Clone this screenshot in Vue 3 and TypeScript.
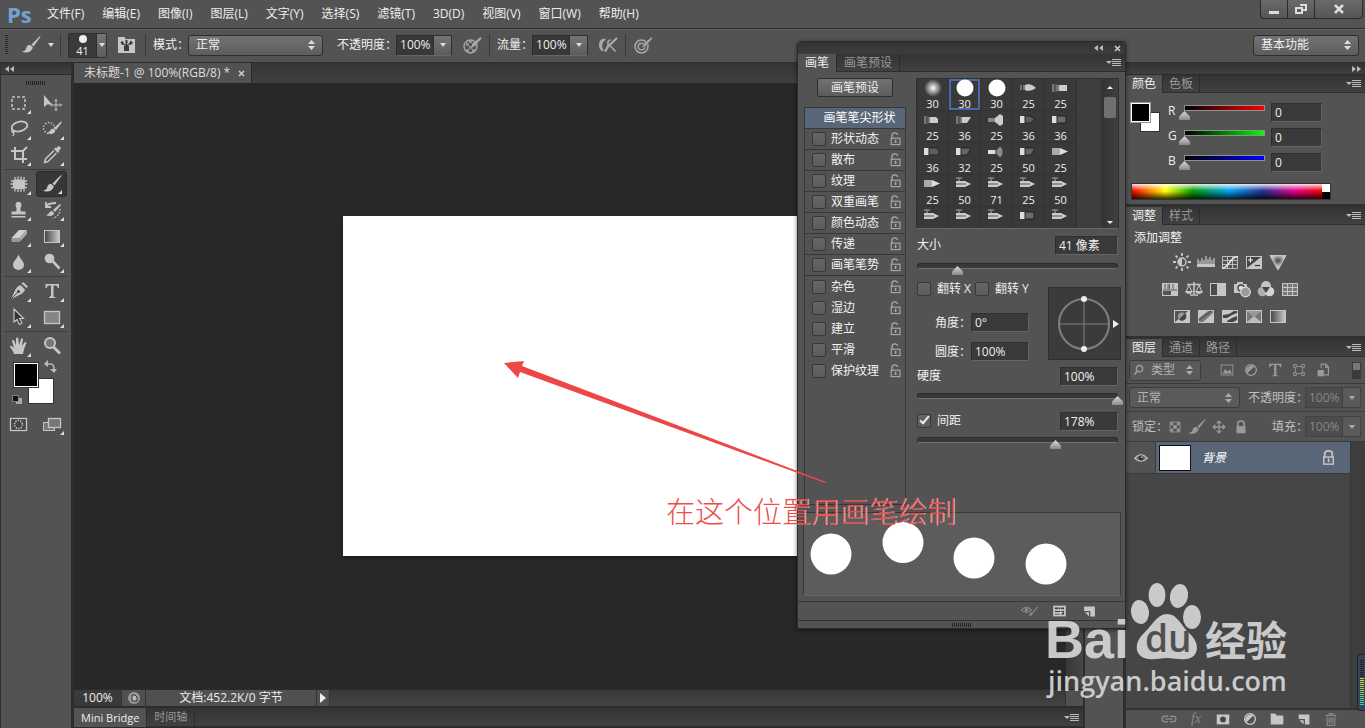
<script setup lang="ts">
import { ref } from 'vue'

interface Tool { icon: string; label: string; more: boolean; active?: boolean }
interface Tip { kind: string; size: string; active?: boolean }

const menus = ['文件(F)', '编辑(E)', '图像(I)', '图层(L)', '文字(Y)', '选择(S)', '滤镜(T)', '3D(D)', '视图(V)', '窗口(W)', '帮助(H)']

const icons: Record<string, string> = {
  brush: '<path d="M19 1 L10.500 9.500 L12.500 11.500 L19.500 1.800Z"/><path d="M9.700 10.200C6.500 9.500 5.500 12 5 14C4.500 15.500 2.500 16.300 1 16.600C4 18.500 10 18 11.900 12.500Z"/>',
  marquee: '<rect x="3" y="4" width="13" height="12" fill="none" stroke="currentColor" stroke-width="1.500" stroke-dasharray="3 2"/>',
  move: '<path d="M2 2V14L5 11.500L10 11.500Z"/><path d="M14 6.500V17.500M8.500 12H19.500M12.500 8L14 6.500L15.500 8M12.500 16L14 17.500L15.500 16M10 10.500L8.500 12L10 13.500M18 10.500L19.500 12L18 13.500" stroke="currentColor" fill="none"/>',
  lasso: '<ellipse cx="10.500" cy="7.500" rx="8" ry="4.800" transform="rotate(-14 10.500 7.500)" fill="none" stroke="currentColor" stroke-width="1.800"/><path d="M4 10.500C1.500 12 3 14 5 13C7 12 4 11 4.500 14C5.500 14.500 5 16 3.500 17" fill="none" stroke="currentColor" stroke-width="1.300"/>',
  quick: '<circle cx="7" cy="9" r="5.500" fill="none" stroke="currentColor" stroke-width="1.300" stroke-dasharray="1.500 1.500"/><path d="M19.500 2L12 9L14 11L19.500 4Z"/><path d="M11.200 9.800C8 9.500 9 13 5 13.500C8 16 13 15 13.300 11.500Z"/>',
  crop: '<path d="M6 2V14H18M2 6H14V18M14 6L18 2" fill="none" stroke="currentColor" stroke-width="2"/>',
  dropper: '<path d="M12 4L16 8L17.500 6.800L16.800 6L18.500 4C19.500 2.500 17.500 .5 16 1.500L14 3.200L13.200 2.500Z"/><path d="M12 5.500L3.500 14L2.500 17.500L6 16.500L14.500 8" fill="none" stroke="currentColor" stroke-width="1.500"/>',
  patch: '<rect x="4" y="5.500" width="12" height="9.500" rx="3"/><path d="M6 3V6M9 2.500V6M12 2.500V6M15 3V6M6 14V17.500M9 14V18M12 14V18M15 14V17.500M2 7H5M1.500 10H5M2 13.500H5M15 7H18M15 10H18.500M15 13.500H18" stroke="currentColor" stroke-width="1.300"/>',
  stamp: '<path d="M7.500 10C8 7.500 6.500 7 6.500 4.800C6.500 .8 12.500 .8 12.500 4.800C12.500 7 11 7.500 11.500 10L12 11.500H16.500V14.500H2.500V11.500H7Z"/><rect x="2.500" y="16" width="14" height="1.500"/>',
  history: '<path d="M18 4L11 10L13 12L19 5Z"/><path d="M10 11C7 11 8 14 4 15C7 17 12 16 12 13Z"/><path d="M4 6C7 3 11 3 14 3M4 2V7H9" fill="none" stroke="currentColor" stroke-width="1.800"/><path d="M18 9C18 13 16 17 11 18" fill="none" stroke="currentColor" stroke-width="1.400" stroke-dasharray="1.500 1.500"/>',
  eraser: '<path d="M10 4H18L10.500 12H2.500Z" fill="#d0d0d0"/><path d="M2.500 12H10.500V16H2.500Z" fill="#999"/><path d="M10.500 12L18 4V8L10.500 16Z" fill="#aaa"/>',
  gradient: '<defs><linearGradient id="toolGrad"><stop stop-color="#444"/><stop offset="1" stop-color="#ccc"/></linearGradient></defs><rect x="2.500" y="4.500" width="15" height="12" fill="url(#toolGrad)" stroke="currentColor"/>',
  drop: '<path d="M9.500 2C10 6 15 9 15 13A5.500 5 0 0 1 4 13C4 9 9 6 9.500 2Z"/>',
  dodge: '<circle cx="7.500" cy="6.500" r="4.800"/><path d="M11 9.500L17.500 16.500" stroke="currentColor" stroke-width="2.600"/>',
  pen: '<path d="M14 1L19 5.500L17.500 7L12.500 2.500Z"/><path d="M11.500 4L16 8.500C15 13 9 14 4 17.500L2.500 16.500C6 11 6 6 11.500 4Z"/><path d="M3 17L9 11" stroke="#444"/><circle cx="9.500" cy="10.500" r="1.500" fill="#444"/>',
  type: '<path d="M3.500 3H17V7H15.700C15.500 5 15 4.500 11.500 4.500V15C11.500 16 12 16 13.500 16.300V17H7V16.300C8.500 16 9 16 9 15V4.500C5.500 4.500 5 5 4.800 7H3.500Z"/>',
  path: '<path d="M5 2V15L8 12.500L10.500 17.500L13 16L10.500 11.500H14.500Z" fill="#333" stroke="currentColor" stroke-width="1.200"/>',
  rect: '<rect x="2.500" y="4.500" width="15" height="12" fill="#858585" stroke="currentColor" stroke-width="1.300"/>',
  hand: '<path d="M5 18C4 14 .5 11 1 10C2 9 4 11 5 12L3 5C3 3.500 5 3.500 5.400 5L7 9.500L7 2.500C7 1 9.200 1 9.400 2.500L10 9L12 3C12.600 1.600 14.200 2.300 14 3.800L12.900 10L15.500 6.500C16.600 5.300 18 6.500 17.200 7.800C15.500 11 15 14 14 18Z"/>',
  zoom: '<circle cx="8" cy="7" r="5" fill="#777" stroke="currentColor" stroke-width="2"/><path d="M11.500 11L18 17.500" stroke="currentColor" stroke-width="3"/>',
  mask: '<rect x="1.500" y="4.500" width="16" height="12" fill="#444" stroke="currentColor" stroke-width="1.300"/><circle cx="9.500" cy="10.500" r="4" fill="none" stroke="currentColor" stroke-width="1.600" stroke-dasharray="1.300 1.200"/>',
  screen: '<rect x="1.500" y="8.500" width="11" height="8" fill="#777" stroke="currentColor"/><rect x="6.500" y="4.500" width="12" height="9" fill="#777" stroke="currentColor" stroke-width="1.300"/>',
  folder: '<path d="M1 2H8V4H18V18H1Z"/><path d="M9.500 16V11M9.500 11L5 8M9.500 11V7M9.500 11L14 8" stroke="#3a3a3a" stroke-width="1.400"/><path d="M7 11H12V16H7ZM3.500 7L6 6L7 9L5 10ZM12 8L14 5.500L16 8L13.500 10ZM8.500 5H10.500V8H8.500Z" fill="#3a3a3a"/>',
  pressA: '<circle cx="8.500" cy="11.500" r="6.500" fill="none" stroke="currentColor" stroke-width="1.400"/><path d="M4 8H7V11H4ZM10 8H13V11H10ZM7 11H10V14H7ZM4 14H7V17H4ZM10 14H13V17H10ZM7 5.500H10V8H7Z" opacity=".7"/><path d="M18.500 2L11 8L9 13L13 11L19.500 3.500Z"/>',
  pressB: '<circle cx="8.500" cy="11.500" r="6.500" fill="none" stroke="currentColor" stroke-width="1.500"/><circle cx="8.500" cy="11.500" r="3.300" fill="none" stroke="currentColor" stroke-width="1.500"/><path d="M18.500 2L11 8L8.500 13L13 11L19.500 3.500Z" stroke="#535353" stroke-width=".6"/>',
  airbrush: '<path d="M8 4C3 3 1 6 1 10C1 14 3 16.500 6 16L4.500 13C3 9 6 6 8 4Z"/><path d="M19 3L10 11.500L7 16.500" fill="none" stroke="currentColor" stroke-width="2.400"/><path d="M10 13V6.500L12.500 4.500M12 10.500L17.500 16.500" fill="none" stroke="currentColor" stroke-width="1.600"/>',
  lockOpen: '<path d="M5 9V5.500C5 1.500 12 1.500 12 5" fill="none" stroke="currentColor" stroke-width="1.600"/><rect x="4" y="9" width="11" height="8" fill="none" stroke="currentColor" stroke-width="1.400"/><rect x="8.500" y="11" width="2" height="4"/>',
  lock: '<path d="M6 10V6C6 2 14 2 14 6V10" fill="none" stroke="currentColor" stroke-width="1.800"/><rect x="5" y="9.500" width="10" height="7.500" fill="none" stroke="currentColor" stroke-width="1.500"/><rect x="9.300" y="11" width="1.600" height="4"/>',
  lockFull: '<path d="M6.500 10V6C6.500 2.500 13.500 2.500 13.500 6V10" fill="none" stroke="currentColor" stroke-width="1.800"/><rect x="5" y="9" width="10" height="8"/>',
  sun: '<circle cx="10" cy="10" r="4" fill="none" stroke="currentColor" stroke-width="1.500"/><path d="M10 6A4 4 0 0 0 10 14Z"/><path d="M10 1V4M10 16V19M1 10H4M16 10H19M3.600 3.600L5.500 5.500M14.500 14.500L16.400 16.400M3.600 16.400L5.500 14.500M14.500 5.500L16.400 3.600" stroke="currentColor" stroke-width="1.800"/>',
  levels: '<rect x="1" y="12" width="18" height="3"/><path d="M2 7V12M4 9V12M6 6V12M8 8V12M10 4V12M12 7V12M14 5V12M16 8V12M18 6V12" stroke="currentColor" stroke-width="1.200"/>',
  curves: '<path d="M2.500 4.500H17.500V16.500H2.500ZM2.500 8.500H17.500M2.500 12.500H17.500M7.500 4.500V16.500M12.500 4.500V16.500" fill="none" stroke="currentColor" stroke-width=".9"/><path d="M2 16C10 16 9 5 18 4.500" fill="none" stroke="#e8e8e8" stroke-width="1.700"/>',
  exposure: '<rect x="2.500" y="4.500" width="15" height="12" fill="#444" stroke="currentColor"/><path d="M17 5V16H3Z"/><path d="M4 8H9M6.500 5.500V10.500" stroke="#eee" stroke-width="1.200"/><path d="M11 13.500H16" stroke="#333" stroke-width="1.200"/>',
  vibrance: '<defs><radialGradient id="vibGrad" cx=".5" cy=".35" r=".4"><stop stop-color="#444"/><stop offset="1" stop-color="#c6c6c6"/></radialGradient></defs><path d="M2 3.500H18L10 18Z" fill="url(#vibGrad)" stroke="currentColor"/>',
  hue: '<rect x="2" y="4" width="16" height="13"/><path d="M5 5V10M8 5V10M9.500 5V10M13 5V10M3 11H17" stroke="#555"/><path d="M3 12H11V16H3Z" fill="#555"/>',
  balance: '<path d="M10 3V15M6 16H14M3 5.500H17" stroke="currentColor" stroke-width="1.600"/><path d="M5 6L2 13H8L5 6M15 6L12 13H18L15 6" fill="none" stroke="currentColor"/><path d="M1 12H9C8 16 2 16 1 12ZM11 12H19C18 16 12 16 11 12Z"/>',
  bw: '<rect x="2.500" y="4.500" width="15" height="12" fill="#4a4a4a" stroke="currentColor"/><rect x="9" y="5" width="9" height="12"/>',
  photo: '<path d="M2 5H5V3H11V5H15V14H2Z"/><circle cx="9" cy="9" r="3" fill="#ddd" stroke="#444" stroke-width="1.300"/><circle cx="13.500" cy="13" r="4.800" fill="#999" stroke="#d5d5d5" stroke-width="1.300"/>',
  mixer: '<circle cx="10" cy="7" r="5"/><circle cx="6.500" cy="12.500" r="4.800" fill="#b0b0b0"/><circle cx="13.500" cy="12.500" r="4.800" fill="#d5d5d5"/><path d="M6 8H14L10 14Z" fill="#444"/>',
  table: '<rect x="2" y="4" width="16" height="13"/><path d="M3 5H7V8H3ZM8 5H12V8H8ZM13 5H17V8H13ZM3 9H7V12H3ZM8 9H12V12H8ZM13 9H17V12H13ZM3 13H7V16H3ZM8 13H12V16H8ZM13 13H17V16H13Z" fill="#777"/>',
  invert: '<rect x="2" y="4" width="16" height="13"/><path d="M3 5H16L3 16Z" fill="#555"/><circle cx="10" cy="10.500" r="4" fill="#999"/><path d="M13 7A4 4 0 0 1 7 13.500Z" fill="#444"/>',
  poster: '<rect x="2" y="4" width="16" height="13"/><path d="M3 12L12 5H17V7L7 16H3Z" fill="#777"/><path d="M3 14L15 5" stroke="#555" stroke-width="1.400"/>',
  threshold: '<rect x="2" y="4" width="16" height="13"/><path d="M3 9L9 8L14 5H17V7L12 9L7 12H3ZM7 15L12 12L17 10V14L13 16H7Z" fill="#444"/>',
  selective: '<rect x="2" y="4" width="16" height="13" fill="#c6c6c6"/><path d="M3 5L10 10.500L3 16ZM17 5V16L10 10.500Z" fill="#777"/><path d="M3 5H17L10 10.500Z" fill="#999"/><path d="M3 16H17L10 10.500Z" fill="#bbb"/>',
  link: '<path d="M9 7H5C1.500 7 1.500 13 5 13H9M11 7H15C18.500 7 18.500 13 15 13H11M6 10H14" fill="none" stroke="currentColor" stroke-width="1.700"/>',
  addmask: '<rect x="3" y="5" width="14" height="11"/><circle cx="10" cy="10.500" r="3.200" fill="#444"/>',
  half: '<circle cx="10" cy="10" r="6" fill="none" stroke="currentColor" stroke-width="1.500"/><path d="M14 5.800A6 6 0 0 0 5.800 14Z"/>',
  dir: '<path d="M3 4H8L9.500 6H17V16H3Z"/>',
  page: '<path d="M4 5H16V16H11V10H4Z"/><path d="M5 11.500H9.500V16Z"/>',
  bin: '<path d="M4 6H16M8 6V4H12V6M5.500 7L6 17H14L14.500 7M8 8V15M10 8V15M12 8V15" fill="none" stroke="currentColor" stroke-width="1.300"/>',
  image: '<rect x="3.500" y="4.500" width="13" height="11" fill="none" stroke="currentColor"/><path d="M5 14L8 9L10.500 12L13 9.500L15.500 14Z"/>',
  shape: '<path d="M6 6H14V14H6Z" fill="none" stroke="currentColor"/><path d="M4 4H7V7H4ZM13 4H16V7H13ZM4 13H7V16H4ZM13 13H16V16H13Z" fill="#535353" stroke="currentColor"/>',
  smart: '<path d="M8 8V3.500H13L16 6.500V15.500H11M13 3.500V7H16" fill="none" stroke="currentColor" stroke-width="1.300"/><rect x="4" y="10" width="7" height="7"/>',
  checker: '<path d="M4.500 4.500H15.500V15.500H4.500Z" fill="none" stroke="currentColor"/><path d="M5 5H8V8H5ZM12 5H15V8H12ZM8 8H12V12H8ZM5 12H8V15H5ZM12 12H15V15H12Z"/>',
  cross: '<path d="M10 3V17M3 10H17M7.500 6L10 3.500L12.500 6M7.500 14L10 16.500L12.500 14M6 7.500L3.500 10L6 12.500M14 7.500L16.500 10L14 12.500" fill="none" stroke="currentColor" stroke-width="1.400"/>',
  eye: '<path d="M3 10.500C7 5 13 5 17 10.500C13 14.500 7 14.500 3 10.500Z" fill="#777" stroke="currentColor" stroke-width="1.300"/><circle cx="10" cy="10" r="2.800" fill="#333"/><circle cx="11" cy="9" r="1"/>',
  eyeBrush: '<path d="M1 9C4 5 9 5 12 9C9 12 4 12 1 9Z" fill="none" stroke="currentColor" stroke-width="1.300"/><circle cx="6.500" cy="8.800" r="2"/><path d="M19 5L13 11L14 12.500L19.500 6ZM12.500 11.500C10 12 11 14 8.500 14.500C11 16 14 15 13.700 12.500Z"/>',
  presets: '<rect x="3" y="4" width="14" height="12"/><path d="M5 6H8V8H5ZM9 6H11V8H9ZM12 6H15V8H12ZM5 10H11V11H5ZM12 10H15V11H12ZM5 13H10V14H5ZM11 14L15 11V14Z" fill="#333"/>',
  search: '<circle cx="9.500" cy="8.500" r="3.500" fill="none" stroke="currentColor" stroke-width="1.500"/><path d="M7 11L4 15" stroke="currentColor" stroke-width="2"/>',
}

const toolGroups: Tool[][] = [
  [
    { icon: 'marquee', label: '选框', more: true }, { icon: 'move', label: '移动', more: false },
    { icon: 'lasso', label: '套索', more: true }, { icon: 'quick', label: '快速选择', more: true },
    { icon: 'crop', label: '裁剪', more: true }, { icon: 'dropper', label: '吸管', more: true },
  ],
  [
    { icon: 'patch', label: '修补', more: true }, { icon: 'brush', label: '画笔', more: true, active: true },
    { icon: 'stamp', label: '图章', more: true }, { icon: 'history', label: '历史画笔', more: true },
    { icon: 'eraser', label: '橡皮擦', more: true }, { icon: 'gradient', label: '渐变', more: true },
    { icon: 'drop', label: '模糊', more: true }, { icon: 'dodge', label: '减淡', more: true },
  ],
  [
    { icon: 'pen', label: '钢笔', more: true }, { icon: 'type', label: '文字', more: true },
    { icon: 'path', label: '路径选择', more: true }, { icon: 'rect', label: '矩形', more: true },
  ],
  [
    { icon: 'hand', label: '抓手', more: true }, { icon: 'zoom', label: '缩放', more: false },
  ],
]

const options = [
  { name: '形状动态', line: true }, { name: '散布', line: true }, { name: '纹理', line: true },
  { name: '双重画笔', line: true }, { name: '颜色动态', line: true }, { name: '传递', line: true },
  { name: '画笔笔势', line: true }, { name: '杂色', line: false }, { name: '湿边', line: false },
  { name: '建立', line: false }, { name: '平滑', line: false }, { name: '保护纹理', line: false },
]

const tips: Tip[] = [
  { kind: 'soft', size: '30' }, { kind: 'hard', size: '30', active: true }, { kind: 'hard', size: '30' }, { kind: 'round', size: '25' }, { kind: 'flat', size: '25' },
  { kind: 'bristle', size: '25' }, { kind: 'angle', size: '36' }, { kind: 'fan', size: '25' }, { kind: 'darkRound', size: '36' }, { kind: 'darkFlat', size: '36' },
  { kind: 'darkBristle', size: '36' }, { kind: 'darkAngle', size: '32' }, { kind: 'darkFan', size: '25' }, { kind: 'darkAngle', size: '50' }, { kind: 'pencil', size: '25' },
  { kind: 'pencil', size: '25' }, { kind: 'air', size: '50' }, { kind: 'air', size: '71' }, { kind: 'air', size: '25' }, { kind: 'air', size: '50' },
  { kind: 'air', size: '' }, { kind: 'air', size: '' }, { kind: 'air', size: '' }, { kind: 'darkFlat', size: '' }, { kind: 'air', size: '' },
]

const tipArt: Record<string, string> = {
  soft: '<defs><radialGradient id="softTip"><stop stop-color="#fff"/><stop offset="1" stop-color="#fff" stop-opacity="0"/></radialGradient></defs><circle cx="16" cy="9" r="9" fill="url(#softTip)"/>',
  hard: '<circle cx="16" cy="9" r="8.500" fill="#fff"/>',
  round: '<path d="M7 6H9V11H7ZM10 6H12V11H10Z" fill="#777"/><path d="M12 6C16 4 20 6 23 9C20 11 16 13 12 11Z" fill="#ccc"/>',
  flat: '<path d="M7 5L15 6V12L7 13Z" fill="#777"/><path d="M10 6V12" stroke="#333"/><path d="M14 6H22V12H14Z" fill="#ccc"/>',
  bristle: '<path d="M7 5L13 6V12L7 13Z" fill="#777"/><path d="M10 6V12" stroke="#333"/><path d="M13 6H19L21 8V12H13Z" fill="#ccc"/>',
  angle: '<path d="M7 5L13 6V12L7 13Z" fill="#777"/><path d="M10 6V12" stroke="#333"/><path d="M13 6H22L18 12H13Z" fill="#ccc"/>',
  fan: '<path d="M7 7H14V11H7Z" fill="#888"/><path d="M14 7L19 3L22 5V13L19 15L14 11Z" fill="#ccc"/>',
  darkRound: '<path d="M7 5H12V12H7Z" fill="#ddd"/><path d="M12 5H17L22 9L17 12H12Z" fill="#5e5e5e" stroke="#222"/>',
  darkFlat: '<path d="M7 5H12V12H7Z" fill="#ddd"/><path d="M12 5H21V12H12Z" fill="#6a6a6a" stroke="#222"/>',
  darkBristle: '<path d="M7 5H12V12H7Z" fill="#ddd"/><path d="M12 5H19L22 7V11L20 12H12Z" fill="#5e5e5e" stroke="#222"/>',
  darkAngle: '<path d="M7 5H12V12H7Z" fill="#ddd"/><path d="M12 5H22L18 12H12Z" fill="#666" stroke="#222"/>',
  darkFan: '<path d="M7 7H15V11H7Z" fill="#ddd"/><path d="M15 7L19 3L22 6V12L19 15L15 11Z" fill="#888" stroke="#333"/>',
  pencil: '<path d="M7 5H15V12H7Z" fill="#aaa"/><path d="M15 5L23 8.500L15 12Z" fill="#ddd"/>',
  air: '<path d="M7 3H13M10 3V6" stroke="#aaa"/><path d="M7 6H16L22 9L16 12H7Z" fill="#ccc"/><path d="M7 9H17" stroke="#555"/>',
}

const channels = ['R', 'G', 'B']
const adjustments = [
  ['sun', 'levels', 'curves', 'exposure', 'vibrance'],
  ['hue', 'balance', 'bw', 'photo', 'mixer', 'table'],
  ['invert', 'poster', 'threshold', 'selective', 'gradient'],
]
const layerFilters = ['image', 'half', 'type', 'shape', 'smart']
const layerLocks = ['checker', 'brush', 'cross', 'lockFull']
const layerActions = ['link', 'fx', 'addmask', 'half', 'dir', 'page', 'bin']

const size = ref(20)
const hardness = ref(100)
const spacing = ref(69)
const spacingOn = ref(true)
</script>

<template>
  <div class="app">
    <header class="menubar">
      <span class="logo">Ps</span>
      <nav class="menus"><button v-for="m in menus" :key="m" type="button">{{ m }}</button></nav>
      <div class="winbtns">
        <button type="button" aria-label="最小化"><svg width="12" height="12"><path d="M1 8H11V11H1Z" fill="#ddd" /></svg></button>
        <button type="button" aria-label="还原"><svg width="12" height="12"><path d="M5 2H11V7H8M1 5H7V10H1Z" fill="none" stroke="#ddd" stroke-width="2" /></svg></button>
        <button type="button" class="close" aria-label="关闭"><svg width="12" height="12"><path d="M2 2L10 10M10 2L2 10" stroke="#ddd" stroke-width="2.500" /></svg></button>
      </div>
    </header>

    <section class="optbar">
      <i class="grip-v" />
      <button type="button" class="brushpick" aria-label="画笔工具">
        <svg class="ico" viewBox="0 0 20 20" v-html="icons.brush" /><i class="caret" />
      </button>
      <i class="vsep" />
      <button type="button" class="sizebox" aria-label="画笔大小"><span class="sizeval"><i />41</span><span class="drop"><i class="caret" /></span></button>
      <button type="button" class="plain folder" aria-label="画笔面板"><svg class="ico" viewBox="0 0 20 20" v-html="icons.folder" /></button>
      <i class="vsep" />
      <label class="cn" for="mode">模式：</label>
      <span class="sel mode"><select id="mode"><option>正常</option></select><svg width="7" height="10"><path d="M0 4L3.500 0L7 4ZM0 6H7L3.500 10Z" fill="#ddd" /></svg></span>
      <label class="cn opacity" for="opacity">不透明度：</label>
      <span class="combo"><input id="opacity" value="100%"><button type="button" class="drop" aria-label="不透明度选项"><i class="caret" /></button></span>
      <button type="button" class="plain dim" aria-label="压力不透明度"><svg class="ico" viewBox="0 0 20 20" v-html="icons.pressA" /></button>
      <i class="vsep" />
      <label class="cn" for="flow">流量：</label>
      <span class="combo"><input id="flow" value="100%"><button type="button" class="drop" aria-label="流量选项"><i class="caret" /></button></span>
      <button type="button" class="plain dim" aria-label="喷枪"><svg class="ico" viewBox="0 0 20 20" v-html="icons.airbrush" /></button>
      <i class="vsep" />
      <button type="button" class="plain dim" aria-label="压力大小"><svg class="ico" viewBox="0 0 20 20" v-html="icons.pressB" /></button>
      <span class="sel workspace"><select aria-label="工作区"><option>基本功能</option></select><svg width="7" height="10"><path d="M0 4L3.500 0L7 4ZM0 6H7L3.500 10Z" fill="#ddd" /></svg></span>
    </section>

    <div class="body">
      <aside class="tools">
        <div class="strip"><svg width="9" height="6"><path d="M4 0V6L0 3ZM9 0V6L5 3Z" fill="#bbb" /></svg></div>
        <div class="griprow"><i class="grip-h" /></div>
        <div v-for="(g, gi) in toolGroups" :key="gi" class="group">
          <button v-for="t in g" :key="t.icon" type="button" class="tool" :class="{ active: t.active, more: t.more }" :aria-label="t.label">
            <svg class="ico" viewBox="0 0 20 20" v-html="icons[t.icon]" />
          </button>
        </div>
        <div class="swatches">
          <svg viewBox="0 0 66 48" width="66" height="48">
            <rect x="25.500" y="19.500" width="25" height="25" fill="#fff" stroke="#333" />
            <rect x="10.500" y="3.500" width="25" height="25" fill="#fff" stroke="#333" /><rect x="12" y="5" width="22" height="22" />
            <path d="M44 5H48C50 5 51 7 51 11" fill="none" stroke="#bbb" stroke-width="1.500" /><path d="M45 1V8L41 5ZM47 10H54L51 14Z" fill="#bbb" />
            <path d="M13 39H19V45H13Z" fill="#aaa" /><path d="M9.500 36.500H15.500V42.500H9.500Z" fill="#111" stroke="#888" />
          </svg>
        </div>
        <div class="group modes">
          <button type="button" class="tool" aria-label="快速蒙版"><svg class="ico" viewBox="0 0 20 20" v-html="icons.mask" /></button>
          <button type="button" class="tool more" aria-label="屏幕模式"><svg class="ico" viewBox="0 0 20 20" v-html="icons.screen" /></button>
        </div>
      </aside>

      <main class="work">
        <div class="doctabs"><div class="doctab"><span>未标题-1 @ 100%(RGB/8) *</span><button type="button" aria-label="关闭文档"><svg width="7" height="7"><path d="M1 1L6 6M6 1L1 6" stroke="#ccc" stroke-width="1.600" /></svg></button></div></div>
        <div class="view">
          <div class="canvas"><div class="paper" /></div>
          <div class="vscroll" />
        </div>
        <div class="status">
          <span class="pct">100%</span>
          <button type="button" class="sicon" aria-label="文档信息"><svg width="14" height="14"><circle cx="7" cy="7" r="6" fill="#999" /><path d="M5 4H8L10 6V10H5Z" fill="#bbb" stroke="#333" /></svg></button>
          <span class="docinfo">文档:452.2K/0 字节</span>
          <button type="button" class="sarrow" aria-label="更多"><svg width="8" height="10"><path d="M1 0L7 5L1 10Z" fill="#eee" /></svg></button>
          <span class="hscroll" />
          <span class="corner" />
        </div>
        <div class="tabs low"><button type="button" class="tab on">Mini Bridge</button><button type="button" class="tab">时间轴</button><i class="menuicon" /></div>
      </main>

      <div class="rail" />

      <aside class="dock">
        <div class="strip right"><svg width="9" height="6"><path d="M0 0V6L4 3ZM5 0V6L9 3Z" fill="#bbb" /></svg></div>

        <section class="panel">
          <div class="tabs"><button type="button" class="tab on">颜色</button><button type="button" class="tab">色板</button><i class="menuicon" /></div>
          <div class="colors">
            <div class="colorrow">
              <svg class="pair" width="32" height="32"><rect x="10.500" y="10.500" width="19" height="19" fill="#fff" stroke="#333" /><rect x=".5" y=".5" width="20" height="20" fill="#fff" stroke="#999" /><rect x="2" y="2" width="17" height="17" /></svg>
              <div class="channels">
                <div v-for="c in channels" :key="c" class="channel">
                  <label :for="'ch' + c">{{ c }}</label>
                  <span class="slider" :class="'s' + c"><input type="range" min="0" max="255" value="0" :aria-label="c"></span>
                  <input :id="'ch' + c" class="field" value="0">
                </div>
              </div>
            </div>
            <div class="spectrum"><i /></div>
          </div>
        </section>

        <section class="panel">
          <div class="tabs"><button type="button" class="tab on">调整</button><button type="button" class="tab">样式</button><i class="menuicon" /></div>
          <div class="adjust">
            <p>添加调整</p>
            <div v-for="(r, ri) in adjustments" :key="ri" class="adjrow">
              <button v-for="a in r" :key="a" type="button" class="plain" :aria-label="a"><svg class="ico" viewBox="0 0 20 20" v-html="icons[a]" /></button>
            </div>
          </div>
        </section>

        <section class="panel layers">
          <div class="tabs"><button type="button" class="tab on">图层</button><button type="button" class="tab">通道</button><button type="button" class="tab">路径</button><i class="menuicon" /></div>
          <div class="lrow filter">
            <span class="sel kind"><svg class="ico lens" viewBox="0 0 20 20" v-html="icons.search" /><select aria-label="类型"><option>类型</option></select><svg width="7" height="10"><path d="M0 4L3.500 0L7 4ZM0 6H7L3.500 10Z" fill="#aaa" /></svg></span>
            <div class="filters"><button v-for="f in layerFilters" :key="f" type="button" class="plain" :aria-label="f"><svg class="ico" viewBox="0 0 20 20" v-html="icons[f]" /></button></div>
            <button type="button" class="toggle" aria-label="过滤开关" />
          </div>
          <div class="lrow blend">
            <span class="sel lmode"><select aria-label="混合模式"><option>正常</option></select><svg width="7" height="10"><path d="M0 4L3.500 0L7 4ZM0 6H7L3.500 10Z" fill="#aaa" /></svg></span>
            <label class="cn push" for="lop">不透明度：</label>
            <span class="combo off"><input id="lop" value="100%"><button type="button" class="drop" aria-label="不透明度"><i class="caret" /></button></span>
          </div>
          <div class="lrow locks">
            <span class="cn">锁定：</span>
            <div class="lockset"><button v-for="f in layerLocks" :key="f" type="button" class="plain" :aria-label="f"><svg class="ico" viewBox="0 0 20 20" v-html="icons[f]" /></button></div>
            <label class="cn push" for="lfill">填充：</label>
            <span class="combo off"><input id="lfill" value="100%"><button type="button" class="drop" aria-label="填充"><i class="caret" /></button></span>
          </div>
          <div class="llist">
            <div class="items">
              <div class="layer">
                <button type="button" class="eye" aria-label="显示"><svg class="ico" viewBox="0 0 20 20" v-html="icons.eye" /></button>
                <div class="lname"><i class="thumb" /><em>背景</em><svg class="ico" viewBox="0 0 20 20" v-html="icons.lock" /></div>
              </div>
            </div>
            <div class="lscroll" />
          </div>
          <div class="lfoot">
            <button v-for="a in layerActions" :key="a" type="button" class="plain" :class="{ faint: a === 'link' || a === 'fx' || a === 'bin' }" :aria-label="a">
              <em v-if="a === 'fx'">fx</em><svg v-else class="ico" viewBox="0 0 20 20" v-html="icons[a]" />
            </button>
          </div>
        </section>
      </aside>
    </div>

    <section class="float">
      <div class="ftitle"><svg width="9" height="6"><path d="M4 0V6L0 3ZM9 0V6L5 3Z" fill="#bbb" /></svg><svg width="7" height="7"><path d="M1 1L6 6M6 1L1 6" stroke="#ccc" stroke-width="1.600" /></svg></div>
      <div class="tabs"><button type="button" class="tab on">画笔</button><button type="button" class="tab">画笔预设</button><i class="menuicon" /></div>
      <div class="fbody">
        <div class="left">
          <button type="button" class="preset">画笔预设</button>
          <div class="optlist">
            <button type="button" class="shape">画笔笔尖形状</button>
            <label v-for="o in options" :key="o.name" class="opt" :class="{ line: o.line }">
              <input type="checkbox"><span>{{ o.name }}</span><svg class="ico" viewBox="0 0 20 20" v-html="icons.lockOpen" />
            </label>
          </div>
        </div>
        <div class="rightcol">
          <div class="tipbox">
            <div class="tips">
              <button v-for="(t, i) in tips" :key="i" type="button" class="tip" :class="{ active: t.active }">
                <svg viewBox="0 0 32 18" v-html="tipArt[t.kind]" /><span>{{ t.size }}</span>
              </button>
            </div>
            <div class="tipscroll"><i class="up" /><i class="bar" /><i class="down" /></div>
          </div>
          <div class="frow r1"><label for="size">大小</label><input id="size" class="field wide" value="41 像素"></div>
          <span class="slider track"><input v-model="size" type="range" aria-label="大小"></span>
          <div class="mid">
            <div class="midl">
              <div class="flip"><label><input type="checkbox"><span>翻转 X</span></label><label><input type="checkbox"><span>翻转 Y</span></label></div>
              <div class="ang"><label for="angle">角度：</label><input id="angle" class="field" value="0°"></div>
              <div class="ang"><label for="round">圆度：</label><input id="round" class="field" value="100%"></div>
            </div>
            <svg class="dial" width="73" height="73"><rect x=".5" y=".5" width="72" height="72" fill="#3b3b3b" stroke="#2e2e2e" /><path d="M11 37H61M36 12V62" stroke="#6c6c6c" stroke-width="1.500" /><circle cx="36" cy="37" r="25" fill="none" stroke="#808080" stroke-width="2" /><circle cx="36" cy="12" r="3" fill="#eee" /><circle cx="36" cy="62" r="3" fill="#eee" /><path d="M65 33V41L71 37Z" fill="#eee" /></svg>
          </div>
          <div class="frow"><label for="hard">硬度</label><input id="hard" class="field" value="100%"></div>
          <span class="slider track"><input v-model="hardness" type="range" aria-label="硬度"></span>
          <div class="frow r3"><label><input v-model="spacingOn" type="checkbox"><span>间距</span></label><input class="field" value="178%" aria-label="间距"></div>
          <span class="slider track"><input v-model="spacing" type="range" aria-label="间距"></span>
        </div>
      </div>
      <div class="preview">
        <svg viewBox="0 0 317 82"><g fill="#fff"><circle cx="27" cy="41" r="20.500" /><circle cx="99" cy="29.500" r="20.500" /><circle cx="170" cy="45" r="20.500" /><circle cx="242" cy="51" r="20.500" /></g></svg>
      </div>
      <div class="ffoot">
        <svg class="ico faint" viewBox="0 0 20 20" v-html="icons.eyeBrush" /><svg class="ico" viewBox="0 0 20 20" v-html="icons.presets" /><svg class="ico" viewBox="0 0 20 20" v-html="icons.page" />
      </div>
      <div class="fend"><i class="grip-h" /></div>
    </section>

    <svg class="arrow" width="324" height="126"><path d="M0 3L20 1L18 6L322 122L321 123L16 12L14 18Z" fill="#ee4646" /></svg>
    <div class="note">在这个位置用画笔绘制</div>

    <i class="meter" />
    <svg class="mark" width="260" height="130" viewBox="0 0 260 130">
      <g fill="#d6d6d6" opacity=".92">
        <text x="1" y="77" class="m1">Bai</text>
        <ellipse cx="96" cy="31" rx="9" ry="12" transform="rotate(-8 96 31)" /><ellipse cx="113" cy="14" rx="8.500" ry="12" />
        <ellipse cx="135" cy="15" rx="9" ry="12" transform="rotate(12 135 15)" /><ellipse cx="148" cy="36" rx="9" ry="12" />
        <path d="M123 33C133 33 137 44 145 52C157 62 155 77 142 78C135 79 130 77 123 77C116 77 111 79 105 78C91 77 89 63 99 53C108 45 113 33 123 33Z" />
        <text x="161" y="75" class="m3">经验</text>
        <text x="4" y="110" class="m4">jingyan.baidu.com</text>
      </g>
      <text x="101" y="71" class="m2">du</text>
    </svg>
  </div>
</template>

<style>
html, body { margin: 0; background: #282828; }
*, *::before, *::after { box-sizing: border-box; }
.ico path:not([fill]), .ico rect:not([fill]), .ico circle:not([fill]) { fill: currentColor; }
</style>

<style scoped>
.app { position: relative; height: 100vh; display: flex; flex-direction: column; overflow: hidden; color: #eee; background: #535353; font: 12px/16px "Open Sans", "Noto Sans CJK SC", sans-serif; user-select: none; }
button, input, select { font: inherit; color: inherit; margin: 0; padding: 0; border: 0; background: none; outline: none; }
button { display: flex; align-items: center; justify-content: center; }
i { display: block; flex: none; }
.ico { width: 20px; height: 20px; color: #c6c6c6; flex: none; display: block; }
.menubar { height: 29px; flex: none; display: flex; align-items: center; border-bottom: 1px solid #2c2c2c; padding-left: 7px; }
.logo { width: 40px; font: bold 22px/26px "Open Sans", sans-serif; color: #73a3d6; }
.menus { display: flex; gap: 18px; flex: 1; }
.winbtns { display: flex; align-self: flex-start; height: 19px; margin-right: 2px; border: 1px solid #2b2b2b; border-top: 0; border-radius: 0 0 4px 4px; background: linear-gradient(#6a6a6a, #565656); }
.winbtns button { width: 27px; border-right: 1px solid #2b2b2b; }
.winbtns .close { width: 47px; border-right: 0; }
.optbar { height: 34px; flex: none; display: flex; align-items: center; border-top: 1px solid #626262; border-bottom: 1px solid #2c2c2c; padding: 0 6px 2px 5px; }
.grip-v { width: 3px; height: 20px; background: repeating-linear-gradient(#2c2c2c 0 1px, transparent 1px 2px); }
.grip-h { width: 20px; height: 4px; background: repeating-linear-gradient(90deg, #222 0 1px, transparent 1px 2px); }
.caret { width: 0; height: 0; border: 3px solid transparent; border-top: 4px solid #ddd; border-bottom: 0; }
.brushpick { gap: 7px; margin-left: 13px; }
.vsep { width: 1px; height: 23px; background: #3b3b3b; margin: 0 7px; }
.brushpick + .vsep { margin-left: 6px; }
.sizebox { height: 25px; border: 1px solid #2f2f2f; border-radius: 2px; background: #3a3a3a; align-items: stretch; }
.sizeval { width: 27px; font-size: 11px; line-height: 12px; display: flex; flex-direction: column; align-items: center; justify-content: space-between; }
.sizeval i { width: 8px; height: 8px; border-radius: 4px; background: #eee; margin-top: 1px; }
.drop { display: flex; align-items: center; justify-content: center; background: linear-gradient(#757575, #5c5c5c); border-left: 1px solid #2f2f2f; }
.sizebox .drop { width: 10px; }
.folder { margin: 0 1px 0 10px; }
.cn { white-space: nowrap; color: #f0f0f0; margin-right: -5px; }
.sel { display: grid; grid-template-columns: 1fr 14px; align-items: center; height: 21px; border: 1px solid #2e2e2e; border-radius: 3px; background: linear-gradient(#727272, #5d5d5d); }
.sel select { grid-area: 1 / 1 / 2 / 3; width: 100%; height: 19px; appearance: none; padding-left: 7px; }
.sel > svg:last-child { grid-area: 1 / 2; pointer-events: none; }
.mode { width: 135px; margin: 0 14px 0 4px; }
.workspace { width: 106px; margin-left: auto; }
.combo { display: flex; width: 56px; height: 21px; border: 1px solid #2e2e2e; border-bottom-color: #666; background: #383838; }
.combo input { width: 36px; padding-left: 3px; }
.combo .drop { flex: 1; }
.optbar .combo { margin-left: 4px; margin-right: 10px; }
.dim .ico { color: #a8a8a8; }
.body { flex: 1; min-height: 0; display: flex; }
.strip { height: 12px; background: linear-gradient(#333, #404040); border-bottom: 1px solid #2b2b2b; display: flex; align-items: center; padding: 0 4px; flex: none; }
.strip.right { height: 12px; justify-content: flex-end; }
.tools { width: 73px; flex: none; border-left: 1px solid #303030; border-right: 2px solid #2f2f2f; }
.griprow { height: 15px; display: flex; justify-content: center; align-items: center; }
.group { display: grid; grid-template-columns: 33px 33px; grid-auto-rows: 26px; padding: 0 1px; position: relative; }
.group + .group { margin-top: 3px; }
.group + .group::before { content: ""; position: absolute; top: -2px; left: 4px; right: 4px; height: 1px; background: #3a3a3a; }
.tool { position: relative; border-radius: 3px; }
.tool.active { background: #373737; border: 1px solid #2c2c2c; margin: 0 1px; }
.tool.more::after { content: ""; position: absolute; right: 4px; bottom: 2px; border: 2px solid #ddd; border-top-color: transparent; border-left-color: transparent; }
.swatches { height: 49px; padding-left: 2px; }
.modes { margin-top: 3px; }
.work { flex: 1; min-width: 0; display: flex; flex-direction: column; padding: 0 0 1px 1px; background: #2b2b2b; }
.doctabs { height: 20px; flex: none; display: flex; background: linear-gradient(#343434, #404040); }
.doctab { display: flex; align-items: center; gap: 8px; padding: 0 6px 0 10px; background: #525252; border-right: 1px solid #2c2c2c; color: #ddd; white-space: nowrap; }
.view { flex: 1; min-height: 0; display: flex; }
.canvas { flex: 1; display: flex; align-items: center; justify-content: center; background: #282828; }
.paper { width: 454px; height: 340px; background: #fff; box-shadow: 0 2px 4px #1b1b1b; }
.vscroll { width: 17px; background: linear-gradient(90deg, #383838, #474747); }
.status { height: 19px; flex: none; display: flex; padding: 1px 0 2px; background: #2c2c2c; }
.status > * { background: #505050; border-right: 1px solid #333; display: flex; align-items: center; justify-content: center; }
.status .pct { width: 48px; background: #3a3a3a; }
.sicon { width: 24px; }
.docinfo { width: 171px; }
.sarrow { width: 13px; }
.status .hscroll { flex: 1; background: linear-gradient(#383838, #444); }
.status .corner { width: 17px; border: 0; }
.tabs { height: 18px; flex: none; display: flex; align-items: stretch; background: linear-gradient(#343434, #414141); border-bottom: 1px solid #2e2e2e; }
.tab { padding: 0 6px; color: #999; border-right: 1px solid #2c2c2c; white-space: nowrap; }
.tab.on { background: #535353; color: #eee; margin-bottom: -1px; }
.menuicon { align-self: center; margin: 0 4px 0 auto; width: 9px; height: 7px; position: relative; background: repeating-linear-gradient(#bbb 0 1px, transparent 1px 2px); }
.menuicon::before { content: ""; position: absolute; left: -6px; top: 2px; border: 3px solid transparent; border-top-color: #bbb; border-bottom: 0; }
.low { height: 19px; font-size: 11px; }
.low .tab { padding: 0 7px; }
.rail { width: 42px; flex: none; background: #535353; border: solid #2e2e2e; border-width: 0 2px; }
.dock { width: 240px; flex: none; display: flex; flex-direction: column; border-left: 1px solid #2e2e2e; }
.panel { border-bottom: 3px solid #303030; }
.colors { height: 111px; padding: 9px 4px 0; }
.colorrow { display: flex; height: 81px; }
.channels { margin-left: 6px; }
.channel { display: grid; grid-template-columns: 16px 81px 51px; align-items: start; height: 25px; }
.channel label { margin-top: 1px; }
.channel .slider { margin-top: 3px; }
.channel .field { margin-left: 6px; margin-top: 1px; width: 51px; }
.field { height: 19px; width: 58px; padding: 0 3px; background: #3a3a3a; border: 1px solid #2f2f2f; border-bottom-color: #666; border-right-color: #606060; }
.slider { display: block; position: relative; height: 16px; }
.slider::before { content: ""; display: block; height: 6px; border: 1px solid #909090; }
.sR::before { background: linear-gradient(90deg, #000, #f00); }
.sG::before { background: linear-gradient(90deg, #000, #0f0); }
.sB::before { background: linear-gradient(90deg, #000, #00f); }
.slider input { position: absolute; left: -5px; top: 6px; width: calc(100% + 10px); height: 9px; appearance: none; display: block; }
.slider input::-webkit-slider-thumb { appearance: none; width: 11px; height: 9px; background: linear-gradient(#ddd, #888); clip-path: polygon(50% 0, 100% 60%, 100% 100%, 0 100%, 0 60%); }
.track::before { height: 6px; background: #383838; border: 1px solid #2c2c2c; border-bottom-color: #707070; border-radius: 3px; }
.track input { top: 3px; }
.spectrum { width: 200px; height: 17px; margin-left: 1px; border: 1px solid #333; display: flex; justify-content: flex-end; background: linear-gradient(#fffd, #fff0 45%, #0000 50%, #000c), linear-gradient(90deg, #e00 0, #ff0 17%, #090 31%, #00a0f0 49%, #223090 66%, #e0008a 82%, #e00 96%); }
.spectrum i { width: 8px; background: linear-gradient(#fff 50%, #000 50%); }
.adjust { height: 111px; padding: 5px 31px 0 8px; }
.adjust p { margin: 0 0 2px; color: #f2f2f2; }
.adjrow { display: flex; justify-content: center; gap: 4px; height: 27px; margin-left: -8px; }
.layers { flex: 1; display: flex; flex-direction: column; border-bottom: 0; }
.lrow { flex: none; display: flex; align-items: center; padding: 0 4px 0 3px; border-bottom: 1px solid #3a3a3a; color: #b4b4b4; }
.lrow .cn { color: #c0c0c0; }
.lrow .ico { color: #9a9a9a; }
.lrow .combo { margin-left: 2px; }
.lrow .caret { border-top-color: #a8a8a8; }
.filter { height: 27px; }
.blend { height: 28px; }
.locks { height: 30px; padding-left: 6px; }
.lrow .sel { border-color: #3b3b3b; background: #5a5a5a; }
.kind { width: 72px; }
.kind .lens { grid-area: 1 / 1; margin-left: 1px; width: 18px; height: 18px; }
.kind select { padding-left: 21px; }
.filters { display: flex; gap: 4px; margin: 0 auto 0 16px; }
.filters .ico { width: 20px; height: 18px; }
.toggle { width: 9px; height: 17px; background: linear-gradient(#777 45%, #3a3a3a 50%); border: 1px solid #3a3a3a; }
.lmode { width: 111px; }
.push { margin-left: auto; }
.off { border-color: #424242; background: #4c4c4c; color: #888; }
.off .drop { background: #5a5a5a; border-color: #424242; }
.lockset { display: flex; gap: 4px; margin-left: 3px; }
.lockset .ico { width: 18px; height: 18px; }
.llist { flex: 1; display: flex; background: #464646; }
.items { flex: 1; }
.layer { display: flex; height: 32px; border-bottom: 1px solid #3a3a3a; }
.eye { width: 30px; background: #535353; border-right: 1px solid #3a3a3a; }
.eye .ico { width: 18px; }
.lname { flex: 1; display: flex; align-items: center; background: #596678; padding: 0 12px 0 3px; color: #fff; }
.lname em { flex: 1; margin-left: 11px; }
.lname .ico { width: 19px; height: 19px; }
.thumb { width: 32px; height: 26px; border: 1px solid #111; background: #fff; }
.lscroll { width: 15px; background: #3e3e3e; border-left: 1px solid #363636; }
.lfoot { height: 20px; flex: none; display: flex; justify-content: flex-end; align-items: center; gap: 7px; padding-right: 24px; border-top: 2px solid #333; }
.lfoot .plain { width: 20px; }
.lfoot .ico { width: 18px; height: 18px; }
.faint, .lfoot .faint .ico, .ico.faint { color: #888; }
.lfoot em { font: italic 14px/16px "Liberation Serif", serif; }
.float { position: absolute; top: 41px; right: 239px; width: 329px; background: #535353; border: 1px solid #2a2a2a; border-radius: 4px 4px 0 0; box-shadow: 0 1px 4px #0008; }
.ftitle { height: 12px; background: linear-gradient(#333, #3d3d3d); border-radius: 3px 3px 0 0; display: flex; align-items: center; justify-content: flex-end; gap: 11px; padding-right: 4px; }
.float .tab { padding: 0 7px; }
.fbody { display: flex; padding: 6px 6px 0; gap: 10px; }
.left { width: 102px; flex: none; display: flex; flex-direction: column; }
.preset { align-self: center; width: 76px; height: 19px; margin-bottom: 10px; border: 1px solid #2f2f2f; border-radius: 2px; background: linear-gradient(#727272, #5c5c5c); }
.optlist { height: 398px; border: 1px solid #383838; }
.shape { width: 100%; height: 21px; background: #596678; border-bottom: 1px solid #383838; padding-left: 9px; line-height: 14px; color: #fff; }
.opt { display: flex; align-items: center; height: 21px; padding: 0 1px 0 7px; color: #f2f2f2; }
.opt.line { border-bottom: 1px solid #383838; }
.opt span { flex: 1; margin-left: 5px; white-space: nowrap; }
.opt .ico { width: 16px; height: 16px; color: #aaa; }
input[type="checkbox"] { appearance: none; width: 14px; height: 14px; flex: none; border: 1px solid #383838; border-radius: 2px; background: linear-gradient(#666, #5c5c5c); display: grid; place-items: center; }
input[type="checkbox"]:checked::before { content: ""; width: 5px; height: 10px; margin-top: -4px; margin-left: 1px; border: solid #eee; border-width: 0 2px 2px 0; transform: rotate(40deg); }
.rightcol { flex: 1; min-width: 0; }
.tipbox { display: flex; width: 203px; height: 151px; background: #3e3e3e; border: 1px solid #303030; border-bottom-color: #666; overflow: hidden; }
.tips { display: grid; grid-template-columns: repeat(5, 32px); grid-auto-rows: 32px; }
.tip { flex-direction: column; justify-content: flex-start; border: solid #323232; border-width: 0 1px 1px 0; background: #393939; font-size: 11px; line-height: 13px; }
.tip svg { width: 32px; height: 18px; flex: none; }
.tip.active { box-shadow: inset 0 0 0 2px #4a69ad; }
.tipscroll { width: 17px; margin-left: auto; background: linear-gradient(90deg, #333, #404040); display: flex; flex-direction: column; align-items: center; padding: 7px 0 4px; }
.up { border: 3px solid transparent; border-bottom-color: #eee; border-top: 0; }
.down { border: 3px solid transparent; border-top-color: #eee; border-bottom: 0; margin-top: auto; }
.bar { width: 12px; height: 21px; margin-top: 8px; border-radius: 2px; background: #707070; }
.frow { display: flex; align-items: center; justify-content: space-between; height: 20px; color: #f2f2f2; width: 201px; margin-left: 1px; }
.frow label, .flip label { display: flex; align-items: center; gap: 6px; }
.r1 { margin-top: 6px; margin-bottom: 8px; }
.wide { width: 63px; }
.track { width: 201px; margin-left: 1px; }
.mid { display: flex; justify-content: space-between; margin: 8px -2px 0 1px; height: 73px; }
.mid .dial { flex: none; }
.midl { color: #eee; }
.flip { display: flex; gap: 2px; margin-top: -5px; height: 14px; white-space: nowrap; }
.ang { display: flex; align-items: center; margin: 10px 0 0 18px; height: 19px; }
.flip span { min-width: 36px; }
.flip + .ang { margin-top: 17px; }
.ang label { width: 36px; white-space: nowrap; }
.mid + .frow { margin-top: 6px; }
.frow + .track { margin-top: 7px; }
.r1 + .track { margin-top: 0; }
.r3 { margin-top: 2px; }
.r3 + .track { margin-top: 6px; }
.preview { margin: 7px 4px 5px 5px; border: 1px solid #383838; border-bottom-color: #666; background: #5c5c5c; }
.preview svg { display: block; width: 317px; height: 82px; }
.ffoot { height: 20px; border-top: 1px solid #383838; border-bottom: 1px solid #333; display: flex; justify-content: flex-end; align-items: center; gap: 11px; padding-right: 26px; }
.ffoot .ico { width: 19px; height: 18px; }
.fend { height: 7px; display: flex; justify-content: center; align-items: center; }
.arrow { position: absolute; left: 504px; top: 360px; }
.note { position: absolute; left: 666px; top: 492px; font: 300 29px/36px "Noto Sans CJK SC", sans-serif; color: #ee4c4c; text-shadow: 1px 0 #fff9; white-space: nowrap; }
.meter { position: absolute; right: 0; bottom: 17px; width: 8px; height: 57px; padding: 5px 1px 5px 2px; border: 1px solid #1a2233; border-right: 0; border-radius: 4px 0 0 4px; background: #3a4356; }
.meter::before { content: ""; display: block; height: 100%; background: repeating-linear-gradient(#0000 0 1px, #3a4356 1px 2px), linear-gradient(#20242c 38%, #e0d840 40%, #80d060 70%, #30d0c0); }
.mark { position: absolute; left: 1044px; top: 581px; pointer-events: none; }
.m1 { font: bold 54px "Liberation Sans", sans-serif; }
.m2 { font: 600 37px "Open Sans", sans-serif; fill: #505050; }
.m3 { font: bold 41px "Noto Sans CJK SC", sans-serif; }
.m4 { font: 600 27px "Open Sans", sans-serif; }
</style>
